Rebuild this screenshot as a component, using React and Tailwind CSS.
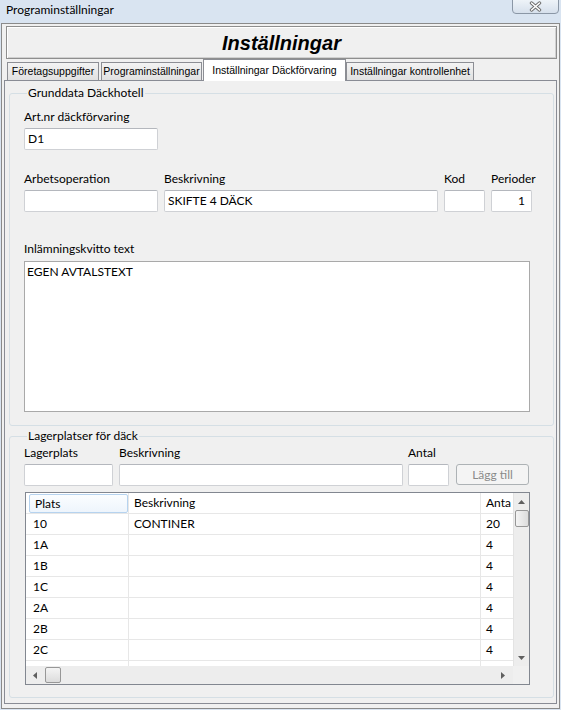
import React from 'react';

const rows = [
  ['10', 'CONTINER', '20'],
  ['1A', '', '4'],
  ['1B', '', '4'],
  ['1C', '', '4'],
  ['2A', '', '4'],
  ['2B', '', '4'],
  ['2C', '', '4'],
  ['', '', ''],
];

const Label = ({ children }) => (
  <div className="h-[14px] leading-[14px] text-[12px] whitespace-nowrap">{children}</div>
);

const Box = ({ w, children, right }) => (
  <div
    className={`h-[22px] bg-white border border-[#cfd1d5] border-t-[#b4b7bd] rounded-[2px] flex items-center text-[12px] whitespace-nowrap ${
      right ? 'justify-end pr-[6px]' : 'pl-[3px]'
    } ${w}`}
  >
    {children}
  </div>
);

const Tab = ({ w, children }) => (
  <div
    className={`h-[18px] flex items-center justify-center border border-b-0 border-[#8c8e94] bg-linear-to-b from-[#f3f3f3] to-[#e1e1e1] text-[10.5px] font-['Liberation_Sans',Arial,sans-serif] whitespace-nowrap ${w}`}
  >
    {children}
  </div>
);

const Arrow = ({ dir }) => {
  const pts = {
    up: '0,4 3.5,0 7,4',
    down: '0,0 3.5,4 7,0',
    left: '4,0 0,3.5 4,7',
    right: '0,0 4,3.5 0,7',
  }[dir];
  const horiz = dir === 'left' || dir === 'right';
  return (
    <svg width={horiz ? 4 : 7} height={horiz ? 7 : 4} viewBox={horiz ? '0 0 4 7' : '0 0 7 4'}>
      <polygon points={pts} fill="#5f5f5f" />
    </svg>
  );
};

export default function App() {
  return (
    <div className="w-[561px] h-[710px] overflow-hidden bg-[#d9e4f1] text-black font-['Lato','Inter',sans-serif]">
      {/* title bar */}
      <div className="h-[23px] flex items-start justify-between pl-[6px] pr-[2px]">
        <span className="mt-[3px] text-[12px] leading-[14px]">Programinställningar</span>
        <div className="w-[47px] h-[15px] -mt-px flex items-center justify-center rounded-b-[4px] border border-[#8b97a6] bg-linear-to-b from-[#eef3f8] to-[#d6e0ec]">
          <svg width="13" height="11" viewBox="0 0 13 11">
            <path d="M2.5 2 L10.5 9 M10.5 2 L2.5 9" stroke="#6b6b6b" strokeWidth="3.4" strokeLinecap="round" />
            <path d="M2.5 2 L10.5 9 M10.5 2 L2.5 9" stroke="#ffffff" strokeWidth="1.6" strokeLinecap="round" />
          </svg>
        </div>
      </div>

      {/* window frame */}
      <div className="ml-[1px] w-[559px] h-[686px] border border-[#8a8a8a] bg-[#f0f0f0] pl-[1px]">
        {/* heading */}
        <div className="mt-[2px] ml-[3px] w-[551px] h-[33px] border border-[#8e8e8e] shadow-[inset_1px_1px_0_#ffffff,inset_-1px_-1px_0_#d0d0d0] flex items-center justify-center">
          <span className="text-[20px] font-bold italic font-['Liberation_Sans',Arial,sans-serif] leading-none">
            Inställningar
          </span>
        </div>

        {/* tabs */}
        <div className="h-[21px] flex items-end pl-[4px]">
          <Tab w="w-[92px]">Företagsuppgifter</Tab>
          <div className="ml-[2px]">
            <Tab w="w-[101px]">Programinställningar</Tab>
          </div>
          <div className="ml-[1px] relative z-10 -mb-px h-[22px] w-[143px] flex items-center justify-center border border-b-0 border-[#8c8e94] bg-white text-[10.5px] font-['Liberation_Sans',Arial,sans-serif] whitespace-nowrap">
            Inställningar Däckförvaring
          </div>
          <Tab w="w-[128px]">Inställningar kontrollenhet</Tab>
        </div>

        {/* tab panel */}
        <div className="ml-[1px] w-[553px] h-[624px] border border-[#898c95] bg-[#f0f0f0] pl-[4px]">
          {/* Grunddata */}
          <fieldset className="mt-[5px] w-[545px] border border-[#d5dfe5] rounded-[3px] pl-[14px] pb-[13px]">
            <legend className="ml-[3px] px-[1px] h-[14px] leading-[14px] text-[12px]">Grunddata Däckhotell</legend>
            <div className="mt-[10px]">
              <Label>Art.nr däckförvaring</Label>
            </div>
            <div className="mt-[4px]">
              <Box w="w-[134px]">D1</Box>
            </div>
            <div className="mt-[22px] flex gap-[6px]">
              <div className="flex flex-col gap-[4px]">
                <Label>Arbetsoperation</Label>
                <Box w="w-[134px]" />
              </div>
              <div className="flex flex-col gap-[4px]">
                <Label>Beskrivning</Label>
                <Box w="w-[274px]">SKIFTE 4 DÄCK</Box>
              </div>
              <div className="flex flex-col gap-[4px]">
                <Label>Kod</Label>
                <Box w="w-[41px]" />
              </div>
              <div className="flex flex-col gap-[4px]">
                <Label>Perioder</Label>
                <Box w="w-[41px]" right>
                  1
                </Box>
              </div>
            </div>
            <div className="mt-[30px]">
              <Label>Inlämningskvitto text</Label>
            </div>
            <div className="mt-[5px] w-[506px] h-[151px] bg-white border border-[#a9a9a9] px-[2px] pt-[2px] text-[12px] leading-[15px]">
              EGEN AVTALSTEXT
            </div>
          </fieldset>

          {/* Lagerplatser */}
          <fieldset className="mt-[3px] w-[545px] border border-[#d5dfe5] rounded-[3px] pl-[14px] pb-[12px]">
            <legend className="ml-[3px] px-[1px] h-[14px] leading-[14px] text-[12px]">Lagerplatser för däck</legend>
            <div className="mt-[3px] flex items-end">
              <div className="flex flex-col gap-[4px]">
                <Label>Lagerplats</Label>
                <Box w="w-[89px]" />
              </div>
              <div className="ml-[6px] flex flex-col gap-[4px]">
                <Label>Beskrivning</Label>
                <Box w="w-[284px]" />
              </div>
              <div className="ml-[5px] flex flex-col gap-[4px]">
                <Label>Antal</Label>
                <Box w="w-[41px]" />
              </div>
              <div className="ml-[7px] mb-[1px] w-[73px] h-[21px] rounded-[3px] border border-[#adb2b5] bg-[#f4f4f4] text-[#8a8a8a] text-[12px] flex items-center justify-center">
                Lägg till
              </div>
            </div>

            {/* grid */}
            <div className="ml-[1px] mt-[6px] w-[505px] h-[193px] border border-[#828790] bg-white flex flex-col text-[12px]">
              <div className="h-[173px] flex">
                <div className="w-[487px] overflow-hidden">
                  <div className="h-[21px] flex border-b border-[#e7e7e7]">
                    <div className="w-[103px] border-r border-[#e7e7e7] pl-[3px] pt-[1px]">
                      <div className="h-[19px] w-[99px] border border-[#b6d3ef] rounded-[2px] bg-linear-to-b from-[#fbfdff] to-[#eef5fc] pl-[5px] flex items-center">
                        Plats
                      </div>
                    </div>
                    <div className="w-[352px] border-r border-[#e7e7e7] pl-[5px] flex items-center">Beskrivning</div>
                    <div className="w-[32px] overflow-hidden pl-[5px] flex items-center whitespace-nowrap">Anta</div>
                  </div>
                  {rows.map((r, i) => (
                    <div key={i} className="h-[21px] flex border-b border-[#e7e7e7]">
                      <div className="w-[103px] border-r border-[#e7e7e7] pl-[7px] flex items-center">{r[0]}</div>
                      <div className="w-[352px] border-r border-[#e7e7e7] pl-[5px] flex items-center">{r[1]}</div>
                      <div className="w-[32px] pl-[5px] flex items-center">{r[2]}</div>
                    </div>
                  ))}
                </div>
                {/* vertical scrollbar */}
                <div className="w-[16px] bg-[#ededed] border-l border-[#e3e3e3] flex flex-col items-center">
                  <div className="h-[17px] flex items-center justify-center">
                    <Arrow dir="up" />
                  </div>
                  <div className="w-[14px] h-[17px] rounded-[2px] border border-[#979797] bg-linear-to-r from-[#f4f4f4] to-[#dcdcdc]" />
                  <div className="flex-1" />
                  <div className="h-[17px] flex items-center justify-center">
                    <Arrow dir="down" />
                  </div>
                </div>
              </div>
              {/* horizontal scrollbar */}
              <div className="h-[18px] flex">
                <div className="w-[487px] bg-[#ededed] flex items-center">
                  <div className="w-[18px] flex justify-center">
                    <Arrow dir="left" />
                  </div>
                  <div className="ml-[1px] w-[16px] h-[16px] rounded-[2px] border border-[#979797] bg-linear-to-b from-[#f4f4f4] to-[#dcdcdc]" />
                  <div className="flex-1" />
                  <div className="w-[18px] mr-[1px] flex justify-center">
                    <Arrow dir="right" />
                  </div>
                </div>
                <div className="w-[16px] bg-[#f0f0f0]" />
              </div>
            </div>
          </fieldset>
        </div>
      </div>
    </div>
  );
}
